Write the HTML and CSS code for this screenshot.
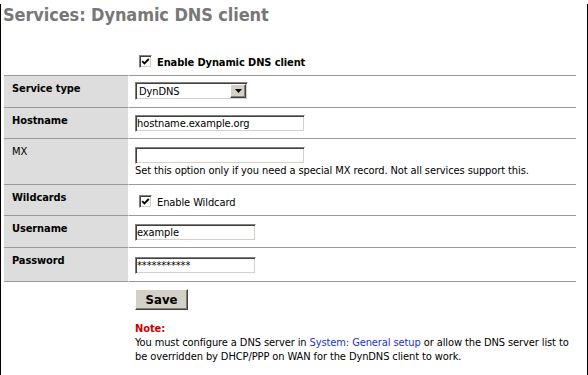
FILE: index.html
```html
<!DOCTYPE html>
<html lang="en">

<head>
    <meta charset="UTF-8">
    <title>Services: Dynamic DNS client</title>
    <link rel="stylesheet" href="styles.css">
</head>

<body>
    <div class="window">
        <p class="pgtitle">Services: Dynamic DNS client</p>

        <div class="form">
            <div class="row lined row-enable">
                <div class="cell label"></div>
                <div class="cell value">
                    <span class="check"><svg width="9" height="9" viewBox="0 0 9 9"><path d="M1.2 4.2 L3.4 6.4 L7.8 2" fill="none" stroke="#000" stroke-width="1.8"/></svg></span>
                    <strong>Enable Dynamic DNS client</strong>
                </div>
            </div>

            <div class="row lined row-service">
                <div class="cell label req">Service type</div>
                <div class="cell value">
                    <div class="select">
                        <span class="select-value">DynDNS</span>
                        <span class="select-btn"><svg width="7" height="4" viewBox="0 0 7 4"><path d="M0 0 H7 L3.5 4 Z" fill="#000"/></svg></span>
                    </div>
                </div>
            </div>

            <div class="row lined row-host">
                <div class="cell label req">Hostname</div>
                <div class="cell value">
                    <input class="formfld wide" type="text" value="hostname.example.org">
                </div>
            </div>

            <div class="row lined row-mx">
                <div class="cell label opt">MX</div>
                <div class="cell value">
                    <input class="formfld wide" type="text" value="">
                    <div class="hint">Set this option only if you need a special MX record. Not all services support this.</div>
                </div>
            </div>

            <div class="row lined row-wild">
                <div class="cell label req">Wildcards</div>
                <div class="cell value">
                    <span class="check"><svg width="9" height="9" viewBox="0 0 9 9"><path d="M1.2 4.2 L3.4 6.4 L7.8 2" fill="none" stroke="#000" stroke-width="1.8"/></svg></span>
                    <span>Enable Wildcard</span>
                </div>
            </div>

            <div class="row lined row-user">
                <div class="cell label req">Username</div>
                <div class="cell value">
                    <input class="formfld short" type="text" value="example">
                </div>
            </div>

            <div class="row lined row-pass">
                <div class="cell label req">Password</div>
                <div class="cell value">
                    <input class="formfld short" type="text" value="***********">
                </div>
            </div>

            <div class="row row-save">
                <div class="cell label"></div>
                <div class="cell value">
                    <button class="formbtn">Save</button>
                </div>
            </div>

            <div class="row row-note">
                <div class="cell label"></div>
                <div class="cell value">
                    <strong class="red">Note:</strong>
                    <p class="note-text">You must configure a DNS server in <a href="#">System: General setup</a> or allow the DNS server list to<br>
                    be overridden by DHCP/PPP on WAN for the DynDNS client to work.</p>
                </div>
            </div>
        </div>
    </div>
</body>

</html>
```

FILE: styles.css
```css
body {
    margin: 0;
    font-family: Tahoma, "DejaVu Sans Condensed", "DejaVu Sans", sans-serif;
    font-size: 11px;
    line-height: 13px;
    letter-spacing: -0.1px;
    color: #000;
    background-color: #fff;
}

.window {
    box-sizing: border-box;
    width: 588px;
    height: 375px;
    border: 1px solid #000;
    border-top: none;
}

.pgtitle {
    margin: 4px 0 0 2px;
    font-size: 18px;
    line-height: 22px;
    font-weight: bold;
    letter-spacing: -0.1px;
    color: #777777;
}

.form {
    width: 572px;
    margin: 23px 0 0 3px;
}

.row {
    display: grid;
    grid-template-columns: 125px 1fr;
}

.cell {
    padding: 6px;
}

.label {
    padding-left: 8px;
    border-right: 1px solid #fff;
}

.req {
    background-color: #dddddd;
    font-weight: bold;
}

.opt {
    background-color: #dddddd;
}

.lined .cell {
    border-bottom: 1px solid #999999;
}

/* checkbox rows */
.row-enable .value,
.row-wild .value {
    display: flex;
    align-items: flex-end;
    gap: 5px;
}

.row-enable .value {
    height: 14px;
}

.row-wild .value {
    height: 18px;
}

.check {
    box-sizing: border-box;
    width: 13px;
    height: 13px;
    margin-left: 4px;
    margin-bottom: 1px;
    border: 1px solid;
    border-color: #808080 #fff #fff #808080;
    box-shadow: inset 1px 1px #404040, inset -1px -1px #d4d0c8;
    background-color: #fff;
    display: flex;
    align-items: center;
    justify-content: center;
    flex-shrink: 0;
}

/* fields */
.formfld {
    box-sizing: border-box;
    display: block;
    height: 17px;
    padding: 0 1px;
    border: 1px solid;
    border-color: #808080 #fff #fff #808080;
    box-shadow: inset 1px 1px #404040, inset -1px -1px #d4d0c8;
    font-family: inherit;
    font-size: 11px;
    letter-spacing: -0.1px;
    color: #000;
    background-color: #fff;
    outline: none;
}

.formfld.wide {
    width: 170px;
}

.formfld.short {
    width: 121px;
}

.row-host .formfld {
    margin: 1px 0 0;
}

.row-mx .formfld {
    margin: 2px 0 0;
}

.hint {
    line-height: 14px;
}

.row-user .formfld {
    margin: 2px 0 0;
}

.row-pass .formfld {
    margin: 3px 0 1px;
}

.select {
    box-sizing: border-box;
    width: 113px;
    height: 18px;
    margin-bottom: 1px;
    display: flex;
    align-items: center;
    border: 1px solid;
    border-color: #808080 #fff #fff #808080;
    box-shadow: inset 1px 1px #404040, inset -1px -1px #d4d0c8;
    background-color: #fff;
}

.select-value {
    flex: 1;
    padding-left: 3px;
}

.select-btn {
    box-sizing: border-box;
    width: 16px;
    height: 14px;
    margin-right: 1px;
    background-color: #d4d0c8;
    border: 1px solid;
    border-color: #fff #404040 #404040 #fff;
    box-shadow: inset -1px -1px #808080;
    display: flex;
    align-items: center;
    justify-content: center;
}

.row-save .value {
    padding-top: 7px;
}

.formbtn {
    width: 53px;
    height: 21px;
    padding: 0;
    display: block;
    font-family: inherit;
    font-size: 13px;
    font-weight: bold;
    color: #000;
    background-color: #d4d0c8;
    border: 1px solid;
    border-color: #fff #404040 #404040 #fff;
    box-shadow: inset -1px -1px #808080;
    cursor: pointer;
}

.row-note .value {
    line-height: 14px;
}

.red {
    display: block;
    color: #cc0000;
}

.note-text {
    margin: 0;
}

a {
    color: #1a33cc;
    text-decoration: none;
}
```
